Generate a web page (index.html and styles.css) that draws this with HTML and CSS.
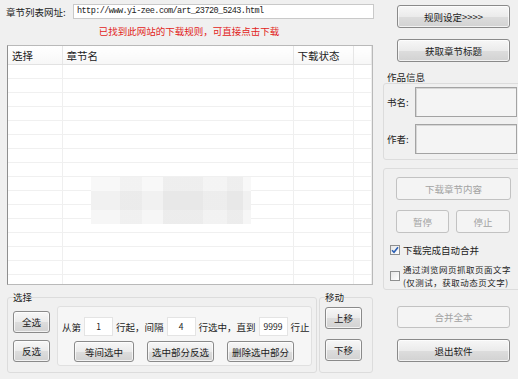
FILE: index.html
```html
<!DOCTYPE html>
<html lang="zh-CN">
  <head>
    <meta charset="UTF-8" />
    <title>章节下载</title>
    <link rel="stylesheet" href="styles.css">
  </head>
  <body>
    <div class="app">
      <div class="left">
        <div class="url-row">
          <span class="url-label">章节列表网址:</span>
          <div class="url-input">http://www.yi-zee.com/art_23720_5243.html</div>
        </div>
        <p class="notice">已找到此网站的下载规则，可直接点击下载</p>

        <div class="list">
          <table class="chapters">
            <colgroup>
              <col class="c-sel" />
              <col class="c-name" />
              <col class="c-state" />
              <col />
            </colgroup>
            <thead>
              <tr><th>选择</th><th>章节名</th><th>下载状态</th><th></th></tr>
            </thead>
            <tbody>
              <tr><td></td><td></td><td></td><td></td></tr>
              <tr><td></td><td></td><td></td><td></td></tr>
              <tr><td></td><td></td><td></td><td></td></tr>
              <tr><td></td><td></td><td></td><td></td></tr>
              <tr><td></td><td></td><td></td><td></td></tr>
              <tr><td></td><td></td><td></td><td></td></tr>
              <tr><td></td><td></td><td></td><td></td></tr>
              <tr><td></td><td></td><td></td><td></td></tr>
              <tr><td></td><td></td><td></td><td></td></tr>
              <tr><td></td><td></td><td></td><td></td></tr>
              <tr><td></td><td></td><td></td><td></td></tr>
              <tr><td></td><td></td><td></td><td></td></tr>
              <tr><td></td><td></td><td></td><td></td></tr>
              <tr><td></td><td></td><td></td><td></td></tr>
              <tr><td></td><td></td><td></td><td></td></tr>
              <tr><td></td><td></td><td></td><td></td></tr>
            </tbody>
          </table>
          <!-- blurred-out row in the original capture -->
          <div class="mosaic"></div>
        </div>

        <div class="bottom">
          <fieldset class="group select-group">
            <legend>选择</legend>
            <div class="select-body">
              <div class="select-btns">
                <button class="btn small">全选</button>
                <button class="btn small">反选</button>
              </div>
              <div class="range-box">
                <div class="range-row">
                  <span>从第</span>
                  <span class="num">1</span>
                  <span>行起，间隔</span>
                  <span class="num">4</span>
                  <span>行选中，直到</span>
                  <span class="num">9999</span>
                  <span>行止</span>
                </div>
                <div class="range-actions">
                  <button class="btn act">等间选中</button>
                  <button class="btn act wide-act">选中部分反选</button>
                  <button class="btn act wide-act">删除选中部分</button>
                </div>
              </div>
            </div>
          </fieldset>

          <fieldset class="group move-group">
            <legend>移动</legend>
            <div class="move-btns">
              <button class="btn small">上移</button>
              <button class="btn small">下移</button>
            </div>
          </fieldset>
        </div>
      </div>

      <div class="right">
        <button class="btn side first">规则设定&gt;&gt;&gt;&gt;</button>
        <button class="btn side">获取章节标题</button>

        <div class="panel-title">作品信息</div>
        <div class="panel info">
          <div class="info-row">
            <span class="info-label">书名:</span>
            <div class="info-input"></div>
          </div>
          <div class="info-row">
            <span class="info-label">作者:</span>
            <div class="info-input"></div>
          </div>
        </div>

        <div class="panel download">
          <button class="btn dl-main" disabled>下载章节内容</button>
          <div class="dl-row">
            <button class="btn pause" disabled>暂停</button>
            <button class="btn stop" disabled>停止</button>
          </div>
          <label class="check">
            <span class="box checked">
              <svg width="8" height="8" viewBox="0 0 8 8"><path d="M1 4.2 L3 6.3 L7 1.2" fill="none" stroke="#2a5fb5" stroke-width="1.6"/></svg>
            </span>
            <span>下载完成自动合并</span>
          </label>
          <label class="check two-line">
            <span class="box"></span>
            <span class="check-text">通过浏览网页抓取页面文字<br>(仅测试，获取动态页文字)</span>
          </label>
        </div>

        <button class="btn side merge" disabled>合并全本</button>
        <button class="btn side quit">退出软件</button>
      </div>
    </div>
  </body>
</html>
```

FILE: styles.css
```css
body {
  margin: 0;
  width: 518px;
  height: 379px;
  overflow: hidden;
  background: #f0f0f0;
  font-family: "Noto Sans CJK SC", "Noto Sans", sans-serif;
  font-size: 9.5px;
  color: #1c1c1c;
}
.app {
  display: flex;
}
.left {
  width: 378px;
}
.right {
  width: 135px;
  margin-left: 5px;
}

/* url + notice */
.url-row {
  display: flex;
  align-items: center;
  margin-top: 4px;
  height: 15px;
}
.url-label {
  width: 73px;
  padding-left: 6px;
  box-sizing: border-box;
}
.url-input {
  width: 301px;
  height: 15px;
  box-sizing: border-box;
  border: 1px solid #c9c9c9;
  background: #fff;
  padding-left: 3px;
  font-family: "Liberation Mono", monospace;
  font-size: 8.5px;
  letter-spacing: -0.55px;
  line-height: 13px;
  color: #222;
}
.notice {
  margin: 6px 0 0;
  height: 12px;
  line-height: 12px;
  text-align: center;
  color: #e2231a;
}

/* chapter list */
.list {
  position: relative;
  margin: 8px 0 0 7px;
  width: 366px;
  height: 240px;
  box-sizing: border-box;
  border: 1px solid #b9b9b9;
  border-left-color: #8f8f8f;
  background: #fff;
  overflow: hidden;
}
.chapters {
  border-collapse: collapse;
  width: 100%;
  table-layout: fixed;
}
.c-sel { width: 54px; }
.c-name { width: 231px; }
.c-state { width: 60px; }
.chapters th {
  height: 18px;
  padding: 0 0 0 4px;
  text-align: left;
  font-weight: normal;
  font-size: 10.5px;
  color: #222;
  border-right: 1px solid #e6e6e6;
  border-bottom: 1px solid #e2e2e2;
  background: linear-gradient(#ffffff, #f7f7f7);
}
.chapters td {
  height: 13px;
  padding: 0;
  border-right: 1px solid #efefef;
  border-bottom: 1px solid #f0f0f0;
}
.mosaic {
  position: absolute;
  left: 83px;
  top: 131px;
  width: 160px;
  height: 47px;
  background:
    linear-gradient(90deg, transparent 0 18%, rgba(0,0,0,0.025) 18% 32%, transparent 32% 45%, rgba(0,0,0,0.04) 45% 70%, rgba(0,0,0,0.015) 70% 85%, rgba(0,0,0,0.04) 85% 95%, transparent 95%),
    linear-gradient(#f8f8f8 0 30%, #f1f1f1 30% 70%, #f6f6f6 70%);
}

/* bottom groups */
.bottom {
  display: flex;
  margin: 6px 0 0 7px;
}
.group {
  margin: 0;
  min-width: 0;
  border: 1px solid #dcdcdc;
  border-radius: 3px;
  box-sizing: border-box;
  height: 82px;
}
.group legend {
  padding: 0;
  line-height: 12px;
}
.select-group {
  width: 310px;
  padding: 0 3px 0 5px;
}
.move-group {
  width: 54px;
  margin-left: 2px;
  padding: 0 0 0 5px;
}
.select-body {
  display: flex;
  align-items: flex-start;
}
.select-btns,
.move-btns {
  display: flex;
  flex-direction: column;
}
.select-btns {
  margin-top: 8px;
  gap: 7px;
}
.move-btns {
  margin-top: 4px;
  gap: 10px;
}
.range-box {
  margin: 3px 0 0 7px;
  width: 255px;
  height: 60px;
  box-sizing: border-box;
  padding: 10px 0 0 4px;
  border: 1px solid #e0e0e0;
  border-radius: 3px;
  background: #f6f6f6;
}
.range-row {
  display: flex;
  align-items: center;
  height: 19px;
}
.num {
  width: 29px;
  height: 19px;
  margin: 0 3px;
  box-sizing: border-box;
  border: 1px solid #e4e4e4;
  background: #fff;
  text-align: center;
  line-height: 17px;
  font-size: 8.5px;
}
.range-actions {
  display: flex;
  gap: 13px;
  margin: 5px 0 0 12px;
}

/* buttons */
.btn {
  display: block;
  padding: 0;
  font: inherit;
  color: #1c1c1c;
  border: 1px solid #8a8a8a;
  border-radius: 3px;
  background: linear-gradient(#f7f7f7, #ebebeb 50%, #dddddd 51%, #d2d2d2);
  box-shadow: inset 0 0 0 1px rgba(255, 255, 255, 0.7);
}
.btn:disabled {
  color: #a3a3a3;
  border-color: #c2c2c2;
  background: #f4f4f4;
  box-shadow: none;
}
.small {
  width: 37px;
  height: 22px;
}
.act {
  width: 60px;
  height: 21px;
}
.wide-act {
  width: 67px;
}
.side {
  width: 113px;
  height: 23px;
  margin: 11px 0 0 14px;
}
.side.first {
  margin-top: 5px;
}

/* right panels */
.panel-title {
  margin-top: 9px;
  padding-left: 4px;
  line-height: 12px;
}
.panel {
  width: 140px;
  box-sizing: border-box;
  border: 1px solid #dcdcdc;
  border-radius: 3px;
}
.info {
  height: 77px;
  padding: 3px 0 0 3px;
}
.info-row {
  display: flex;
  align-items: center;
  height: 30px;
  margin-bottom: 7px;
}
.info-label {
  width: 28px;
}
.info-input {
  width: 102px;
  height: 30px;
  box-sizing: border-box;
  border: 1px solid #a3a3a3;
  box-shadow: inset 1px 1px 0 #d6d6d6;
  background: #f4f4f4;
}
.download {
  height: 122px;
  margin-top: 8px;
  padding: 8px 0 0 12px;
}
.dl-main {
  width: 115px;
  height: 23px;
}
.dl-row {
  display: flex;
  gap: 7px;
  margin-top: 10px;
}
.pause {
  width: 53px;
  height: 23px;
}
.stop {
  width: 54px;
  height: 23px;
}
.check {
  display: flex;
  align-items: center;
  gap: 3px;
  margin: 12px 0 0 -6px;
  height: 10px;
}
.box {
  width: 10px;
  height: 10px;
  box-sizing: border-box;
  border: 1px solid #8e8f8f;
  background: linear-gradient(135deg, #e6e6e6, #ffffff);
  display: flex;
  align-items: center;
  justify-content: center;
}
.two-line {
  margin-top: 8px;
  height: 25px;
}
.check-text {
  font-size: 8.5px;
  letter-spacing: 0.5px;
  line-height: 12.5px;
}

.merge {
  margin-top: 16px;
  height: 22px;
}
.quit {
  height: 23px;
}
```
